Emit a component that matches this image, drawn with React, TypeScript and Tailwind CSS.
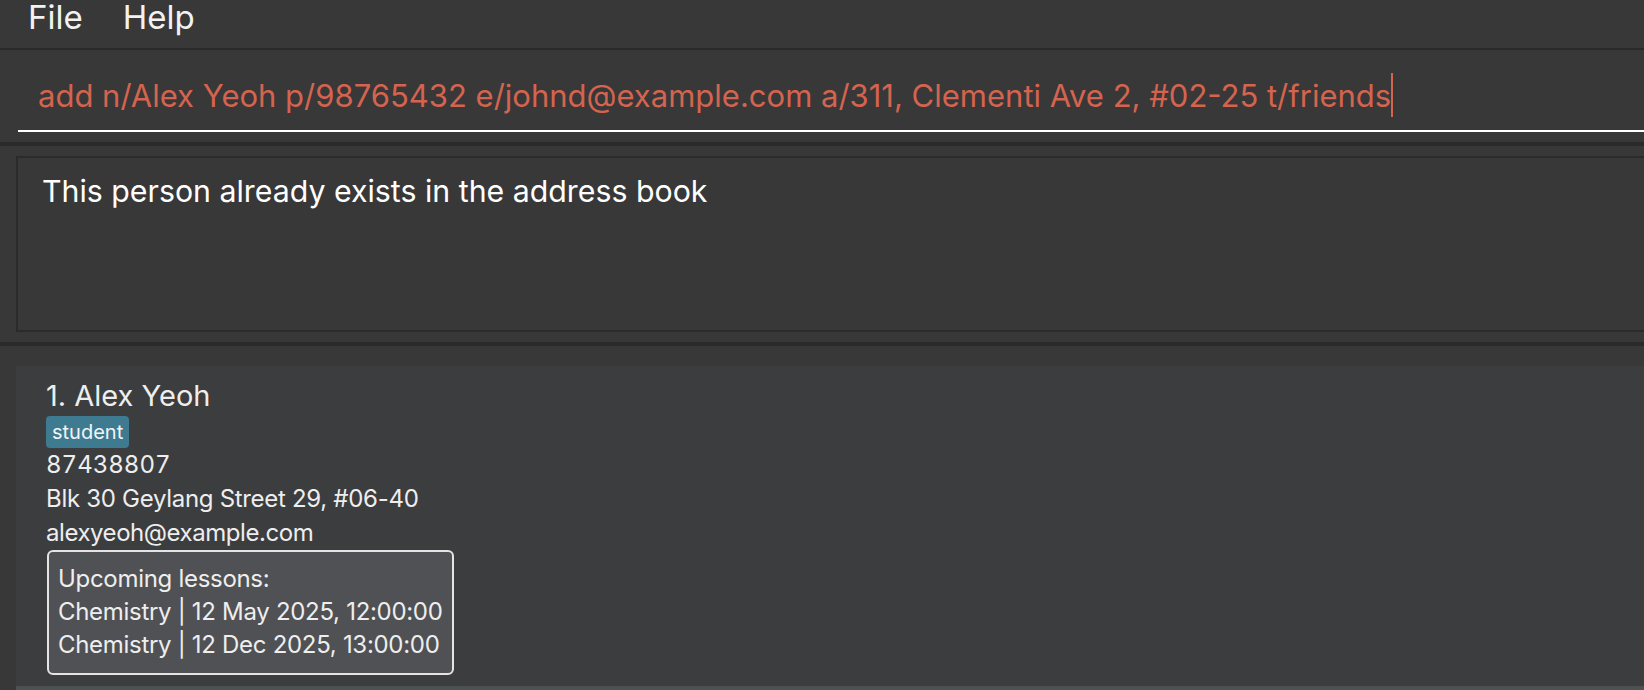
const font = { fontFamily: "Inter, 'Noto Sans', sans-serif" }

function MenuBar() {
  return (
    <div className="h-[48px] flex gap-[40px] pl-[28px] bg-[#383838] text-[33px] leading-[34px] text-[#f2f2f2] border-b-2 border-[#2a2a2a] box-content">
      <span>File</span>
      <span>Help</span>
    </div>
  )
}

function CommandBox() {
  return (
    <div className="h-[92px] bg-[#383838] border-b-4 border-[#2a2a2a] box-content">
      <div className="pt-[23px] pl-[18px]">
        <div className="h-[59px] border-b-2 border-white pl-[20px] text-[31px] leading-[36px] text-[#d4644f] whitespace-nowrap">
          add n/Alex Yeoh p/98765432 e/johnd@example.com a/311, Clementi Ave 2, #02-25 t/friends
          <span className="inline-block align-[-10px] w-[2px] h-[44px] bg-[#d4644f]" />
        </div>
      </div>
    </div>
  )
}

function ResultBox() {
  return (
    <div className="bg-[#383838] pt-[10px] pb-[10px] pl-[16px] border-b-4 border-[#2a2a2a]">
      <div className="h-[176px] border-2 border-r-0 border-[#2b2b2b] pt-[14px] pl-[24px] text-[30.3px] leading-[38px] text-white">
        This person already exists in the address book
      </div>
    </div>
  )
}

function PersonCard() {
  return (
    <div className="bg-[#3c3d3f] pl-[30px] pt-[12px] pb-[11px] text-[#eeeeee]">
      <div className="text-[29px] leading-[36px]">1. Alex Yeoh</div>
      <div className="flex mt-[2px]">
        <span className="h-[32px] px-[6px] rounded-[4px] bg-[#3e7b91] text-[20px] leading-[32px] text-[#f4f4f4]">
          student
        </span>
      </div>
      <div className="text-[24px] leading-[34px] tracking-[-0.3px]">
        <div className="tabular-nums tracking-normal">87438807</div>
        <div>Blk 30 Geylang Street 29, #06-40</div>
        <div className="tracking-[-0.45px]">alexyeoh@example.com</div>
      </div>
      <div className="ml-[1px] w-[407px] border-2 border-[#e4e4e4] rounded-[6px] bg-[#505154] pt-[10px] pb-[12px] pl-[9px] text-[24px] leading-[33px] tracking-[-0.3px] whitespace-nowrap">
        <div>Upcoming lessons:</div>
        <div>Chemistry | 12 May 2025, 12:00:00</div>
        <div>Chemistry | 12 Dec 2025, 13:00:00</div>
      </div>
    </div>
  )
}

export default function App() {
  return (
    <div style={font} className="w-full h-[690px] overflow-hidden bg-[#383838]">
      <MenuBar />
      <CommandBox />
      <ResultBox />
      <div className="pt-[20px] pl-[16px]">
        <PersonCard />
        <div className="h-[20px] bg-[#4c5153]" />
      </div>
    </div>
  )
}
